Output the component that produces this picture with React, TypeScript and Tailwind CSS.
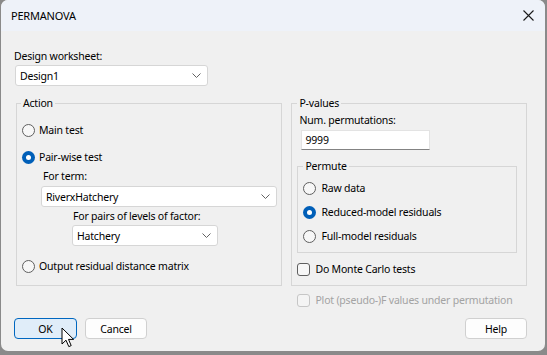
import React from 'react';

const font = "font-['Noto_Sans',sans-serif] text-[10.5px] tracking-[-0.2px] leading-[16px] text-black";

const Radio: React.FC<{ checked?: boolean }> = ({ checked }) =>
  checked ? (
    <span className="w-[13px] h-[13px] rounded-full bg-[#005fb8] flex items-center justify-center shrink-0">
      <span className="w-[5px] h-[5px] rounded-full bg-white" />
    </span>
  ) : (
    <span className="w-[13px] h-[13px] rounded-full border border-[#5f5f5f] bg-[#f7f7f7] shrink-0" />
  );

const Chevron: React.FC = () => (
  <svg width="9" height="5" viewBox="0 0 9 5" className="shrink-0">
    <polyline points="0.5,0.5 4.5,4.5 8.5,0.5" fill="none" stroke="#626262" strokeWidth="1" />
  </svg>
);

const Combo: React.FC<{ value: string; className: string }> = ({ value, className }) => (
  <div className={`h-[21px] bg-white border border-[#d6d6d6] rounded-[3px] flex items-center justify-between pl-[4px] pr-[6px] ${className}`}>
    <span>{value}</span>
    <Chevron />
  </div>
);

const Check: React.FC<{ disabled?: boolean }> = ({ disabled }) => (
  <span
    className={`w-[13px] h-[13px] rounded-[3px] border shrink-0 ${disabled ? 'border-[#c6c6c6] bg-[#f4f4f4]' : 'border-[#5f5f5f] bg-[#f7f7f7]'}`}
  />
);

const Button: React.FC<{ label: string; primary?: boolean; className?: string }> = ({ label, primary, className }) => (
  <button
    type="button"
    className={`h-[21px] w-[62px] rounded-[4px] border flex items-center justify-center ${primary ? 'bg-[#e0edf9] border-[#0067c0]' : 'bg-[#fdfdfd] border-[#d0d0d0]'} ${className ?? ''}`}
  >
    {label}
  </button>
);

export default function App() {
  return (
    <div className={`w-[547px] h-[355px] bg-[#8a8a8a] pl-px pr-[2px] pb-[4px] ${font}`}>
      <div className="relative w-[544px] h-[351px] bg-[#f0f0f0] rounded-[7px] overflow-hidden flex flex-col">
        {/* title bar */}
        <div className="h-[31px] bg-[#eef2f9] flex items-center justify-between pl-[10px] pr-[11px] shrink-0">
          <span className="text-[11px]">PERMANOVA</span>
          <svg width="11" height="11" viewBox="0 0 11 11">
            <path d="M0.5 0.5 L10.5 10.5 M10.5 0.5 L0.5 10.5" stroke="#1a1a1a" strokeWidth="1.1" />
          </svg>
        </div>

        <div className="flex flex-col pl-[13px] pr-[18px]">
          <div className="mt-[17px]">Design worksheet:</div>
          <Combo value="Design1" className="mt-[1px] ml-px w-[193px]" />

          <div className="flex items-start mt-[9px] ml-[2px]">
            {/* Action */}
            <fieldset className="w-[267px] border border-[#d6d6d6] pb-[11px] flex flex-col">
              <legend className="ml-[4px] px-[2px]">Action</legend>
              <label className="mt-[11px] ml-[5px] flex items-center gap-[4px]">
                <Radio />
                <span>Main test</span>
              </label>
              <label className="mt-[11px] ml-[5px] flex items-center gap-[4px]">
                <Radio checked />
                <span>Pair-wise test</span>
              </label>
              <div className="mt-[3px] ml-[26px]">For term:</div>
              <Combo value="RiverxHatchery" className="mt-[2px] ml-[24px] w-[236px]" />
              <div className="mt-[1px] ml-[56px]">For pairs of levels of factor:</div>
              <Combo value="Hatchery" className="mt-[1px] ml-[55px] w-[146px]" />
              <label className="mt-[12px] ml-[5px] flex items-center gap-[4px]">
                <Radio />
                <span>Output residual distance matrix</span>
              </label>
            </fieldset>

            <div className="ml-[9px] w-[236px] flex flex-col">
              {/* P-values */}
              <fieldset className="border border-[#d6d6d6] pb-[8px] flex flex-col">
                <legend className="ml-[5px] px-[2px]">P-values</legend>
                <div className="mt-[1px] ml-[7px]">Num. permutations:</div>
                <div className="mt-[2px] ml-[9px] w-[129px] h-[20px] bg-white border border-[#e3e3e3] border-b-[#838383] flex items-center pl-[3px]">
                  9999
                </div>
                <fieldset className="mt-[8px] ml-[5px] w-[220px] border border-[#d6d6d6] pb-[4px] flex flex-col">
                  <legend className="ml-[5px] px-[2px]">Permute</legend>
                  <div className="mt-[2px]" />
                  <label className="h-[24px] ml-[5px] flex items-center gap-[5px]">
                    <Radio />
                    <span>Raw data</span>
                  </label>
                  <label className="h-[24px] ml-[5px] flex items-center gap-[5px]">
                    <Radio checked />
                    <span>Reduced-model residuals</span>
                  </label>
                  <label className="h-[24px] ml-[5px] flex items-center gap-[5px]">
                    <Radio />
                    <span>Full-model residuals</span>
                  </label>
                </fieldset>
                <label className="mt-[8px] ml-[5px] flex items-center gap-[5px]">
                  <Check />
                  <span>Do Monte Carlo tests</span>
                </label>
              </fieldset>
              <label className="mt-[6px] ml-[6px] flex items-center gap-[5px] text-[#a3a3a3] whitespace-nowrap">
                <Check disabled />
                <span>Plot (pseudo-)F values under permutation</span>
              </label>
            </div>
          </div>

          <div className="mt-[10px] flex items-center">
            <Button label="OK" primary className="w-[63px]" />
            <Button label="Cancel" className="ml-[8px]" />
            <Button label="Help" className="ml-auto" />
          </div>
        </div>

        {/* mouse pointer over OK */}
        <svg className="absolute left-[60px] top-[327px]" width="14" height="22" viewBox="0 0 14 22">
          <path
            d="M1 1 L1 17 L5 13.2 L7.8 19.6 L10.2 18.6 L7.5 12.4 L12.6 12.4 Z"
            fill="#ffffff"
            stroke="#000000"
            strokeWidth="1"
            strokeLinejoin="round"
          />
        </svg>
      </div>
    </div>
  );
}
